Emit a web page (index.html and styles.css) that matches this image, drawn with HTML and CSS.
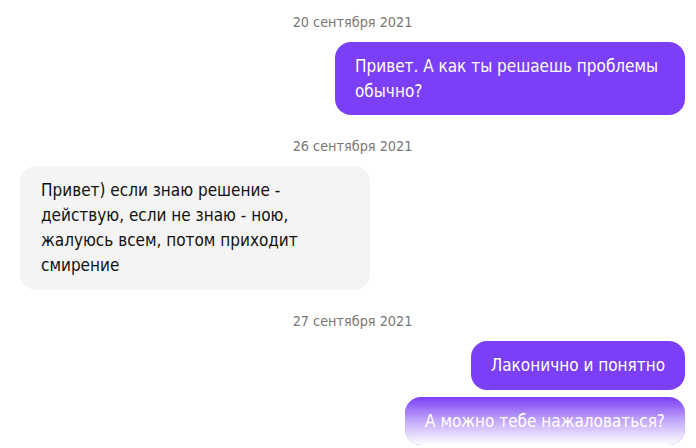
FILE: index.html
```html
<!DOCTYPE html>
<html lang="ru">
<head>
    <meta charset="UTF-8">
    <meta name="viewport" content="width=device-width, initial-scale=1.0">
    <title>Чат</title>
    <link rel="stylesheet" href="styles.css">
</head>
<body>

<div class="chat">
    <div class="date">20 сентября 2021</div>
    <div class="msg out">Привет. А как ты решаешь проблемы обычно?</div>

    <div class="date">26 сентября 2021</div>
    <div class="msg in">Привет) если знаю решение - действую, если не знаю - ною, жалуюсь всем, потом приходит смирение</div>

    <div class="date">27 сентября 2021</div>
    <div class="msg out">Лаконично и понятно</div>
    <div class="msg out fading">А можно тебе нажаловаться?</div>
</div>

</body>
</html>
```

FILE: styles.css
```css
/* Base */
body {
    margin: 0;
    background: #fff;
    font-family: "DejaVu Sans Condensed", "DejaVu Sans", sans-serif;
    overflow: hidden;
}

/* Chat column */
.chat {
    display: flex;
    flex-direction: column;
    padding: 12px 11px 0 20px;
}

/* Date separators */
.date {
    align-self: center;
    color: #777;
    font-size: 14.3px;
    line-height: 20px;
    margin-bottom: 10px;
}

/* Message bubbles */
.msg {
    box-sizing: border-box;
    max-width: 350px;
    padding: 12px 20px;
    border-radius: 16px;
    font-size: 17px;
    line-height: 24.5px;
    margin-bottom: 7px;
}

.msg.out {
    align-self: flex-end;
    background: #7a3ff6;
    color: #fff;
}

.msg.in {
    align-self: flex-start;
    width: 350px;
    background: #f4f4f4;
    color: #111;
    padding: 12px 21px;
    line-height: 25px;
}

.msg + .date {
    margin-top: 14px;
}

/* Last message fades into the page */
.msg.fading {
    position: relative;
}

.msg.fading::after {
    content: "";
    position: absolute;
    left: 0;
    top: 0;
    right: 0;
    bottom: 0;
    border-radius: 16px;
    background: linear-gradient(to bottom, rgba(255, 255, 255, 0) 0%, rgba(255, 255, 255, 0.6) 55%, rgba(255, 255, 255, 1) 100%);
}
```
